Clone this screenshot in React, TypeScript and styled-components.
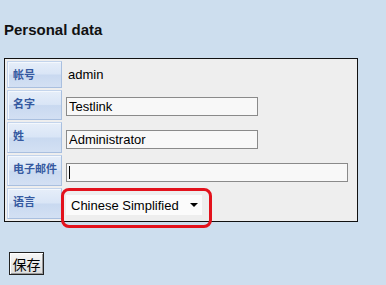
import React from 'react';
import styled, { createGlobalStyle } from 'styled-components';

const GlobalStyle = createGlobalStyle`
  html, body {
    margin: 0;
    padding: 0;
    background-color: #cddeee;
  }
  body {
    font-family: "Liberation Sans", Arial, "Noto Sans CJK SC", sans-serif;
    color: #000;
  }
`;

const Page = styled.div`
  width: 386px;
  height: 285px;
  padding: 0 4px;
  box-sizing: border-box;
  background-color: #cddeee;
  overflow: hidden;
`;

const Title = styled.h1`
  margin: 0;
  padding-top: 21px;
  height: 37px;
  font-size: 15px;
  line-height: 17px;
  font-weight: bold;
  color: #111;
`;

const FormBox = styled.div`
  width: 354px;
  box-sizing: border-box;
  border: 1px solid #111;
  background-color: #eeeeee;
  padding: 2px;
  display: grid;
  grid-template-columns: 55px 1fr;
  grid-template-rows: 27px 30px 31px 31px 31px;
  column-gap: 4px;
  row-gap: 2px;
`;

const Label = styled.div`
  box-sizing: border-box;
  padding: 5px 0 0 5px;
  font-size: 11px;
  line-height: 14px;
  font-weight: bold;
  color: #3559a0;
  font-family: "Noto Sans CJK SC", sans-serif;
  white-space: nowrap;
  border: 1px solid #c3d4ec;
  border-right-color: #a9bfdf;
  border-bottom-color: #a9bfdf;
  background: linear-gradient(
    #e6eef9 0%,
    #d9e5f6 48%,
    #c9d9f0 52%,
    #d3e0f3 100%
  );
  box-shadow: inset 1px 1px 0 #f4f8fd;
`;

const Value = styled.div`
  display: flex;
  align-items: center;
  padding-top: 3px;
  position: relative;
  font-size: 13px;
`;

const Plain = styled.span`
  padding-left: 2px;
  margin-top: -3px;
`;

const Field = styled.input<{ $wide?: boolean }>`
  width: ${(p) => (p.$wide ? '282px' : '192px')};
  height: 19px;
  box-sizing: border-box;
  border: 1px solid #8a8a8a;
  background-color: #f8f8f8;
  font-family: "Liberation Sans", Arial, sans-serif;
  font-size: 13px;
  padding: 0 2px;
  margin: 0;
  color: #000;
  outline: none;
`;

const FieldWrap = styled.div`
  position: relative;
  display: flex;
`;

const Caret = styled.span`
  position: absolute;
  left: 3px;
  top: 3px;
  width: 1px;
  height: 13px;
  background: #000;
`;

const SelectBox = styled.div`
  position: relative;
  width: 136px;
  height: 20px;
  box-sizing: border-box;
  background-color: #fbfbfb;
  display: flex;
  align-items: center;
  padding-left: 5px;
  font-size: 13px;
`;

const Arrow = styled.span`
  position: absolute;
  right: 4px;
  top: 8px;
  width: 0;
  height: 0;
  border-left: 4px solid transparent;
  border-right: 4px solid transparent;
  border-top: 4px solid #000;
`;

const Highlight = styled.div`
  position: absolute;
  left: -5px;
  top: -7px;
  width: 151px;
  height: 40px;
  box-sizing: border-box;
  border: 3px solid #e3121c;
  border-radius: 8px;
  pointer-events: none;
`;

const SaveButton = styled.button`
  margin: 30px 0 0 5px;
  width: 35px;
  height: 23px;
  box-sizing: border-box;
  border: 1px solid #222;
  box-shadow: inset 1px 1px 0 #fff, inset -1px -1px 0 #9a9a9a;
  background: linear-gradient(#f7f7f7, #dcdcdc);
  font-family: "Noto Sans CJK SC", sans-serif;
  font-size: 14px;
  line-height: 16px;
  padding: 0;
  color: #000;
`;

const App: React.FC = () => {
  return (
    <Page>
      <GlobalStyle />
      <Title>Personal data</Title>
      <FormBox>
        <Label>帐号</Label>
        <Value>
          <Plain>admin</Plain>
        </Value>
        <Label>名字</Label>
        <Value>
          <Field readOnly value="Testlink" />
        </Value>
        <Label>姓</Label>
        <Value>
          <Field readOnly value="Administrator" />
        </Value>
        <Label>电子邮件</Label>
        <Value>
          <FieldWrap>
            <Field $wide readOnly value="" />
            <Caret />
          </FieldWrap>
        </Value>
        <Label>语言</Label>
        <Value>
          <SelectBox>
            Chinese Simplified
            <Arrow />
            <Highlight />
          </SelectBox>
        </Value>
      </FormBox>
      <SaveButton>保存</SaveButton>
    </Page>
  );
};

export default App;
